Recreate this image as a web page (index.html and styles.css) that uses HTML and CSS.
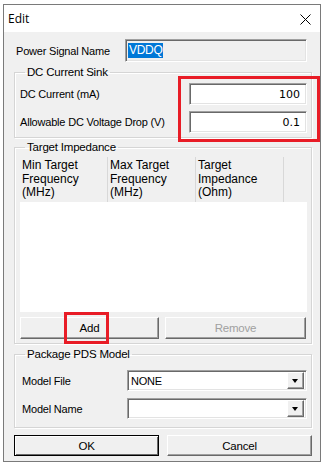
FILE: index.html
```html
<!DOCTYPE html>
<html lang="en">
  <head>
    <meta charset="UTF-8" />
    <title>Edit</title>
    <link rel="stylesheet" href="styles.css">
  </head>
  <body>
    <div class="window">
      <div class="titlebar">
        <span class="title">Edit</span>
        <svg class="close" width="11" height="11" viewBox="0 0 11 11">
          <path d="M0.5 0.5 L10.5 10.5 M10.5 0.5 L0.5 10.5" stroke="#000" stroke-width="1" fill="none" />
        </svg>
      </div>

      <div class="client">
        <div class="row name-row">
          <label>Power Signal Name</label>
          <div class="textbox readonly name-box"><span class="selected">VDDQ</span></div>
        </div>

        <fieldset class="group dc-group">
          <legend>DC Current Sink</legend>
          <div class="row">
            <label>DC Current (mA)</label>
            <div class="textbox number">100</div>
          </div>
          <div class="row">
            <label>Allowable DC Voltage Drop (V)</label>
            <div class="textbox number">0.1</div>
          </div>
        </fieldset>

        <fieldset class="group target-group">
          <legend>Target Impedance</legend>
          <div class="listview">
            <div class="list-header">
              <div class="col">Min Target<br />Frequency<br />(MHz)</div>
              <div class="col">Max Target<br />Frequency<br />(MHz)</div>
              <div class="col">Target<br />Impedance<br />(Ohm)</div>
            </div>
            <div class="list-body"></div>
          </div>
          <div class="button-row">
            <button class="btn add-btn">Add</button>
            <button class="btn remove-btn" disabled>Remove</button>
          </div>
        </fieldset>

        <fieldset class="group pds-group">
          <legend>Package PDS Model</legend>
          <div class="row combo-row">
            <label>Model File</label>
            <div class="combo">
              <span class="combo-text">NONE</span>
              <span class="combo-arrow"></span>
            </div>
          </div>
          <div class="row combo-row">
            <label>Model Name</label>
            <div class="combo">
              <span class="combo-text"></span>
              <span class="combo-arrow"></span>
            </div>
          </div>
        </fieldset>

        <div class="dialog-buttons">
          <button class="btn default-btn">OK</button>
          <button class="btn">Cancel</button>
        </div>
      </div>

      <!-- red annotation boxes drawn over the dialog -->
      <div class="mark mark-dc"></div>
      <div class="mark mark-add"></div>
    </div>
  </body>
</html>
```

FILE: styles.css
```css
html,
body {
  margin: 0;
  padding: 0;
  background: #fff;
}

body {
  font-family: 'Liberation Sans', Arial, sans-serif;
  font-size: 11px;
  letter-spacing: -0.2px;
  color: #000;
}

.window {
  position: relative;
  box-sizing: border-box;
  width: 318px;
  margin: 4px 0 0 3px;
  border: 1px solid #7a7a7a;
  background: #f0f0f0;
}

.titlebar {
  display: flex;
  align-items: center;
  justify-content: space-between;
  height: 27px;
  padding: 0 9px 0 4px;
  background: #fff;
}

.title {
  font-family: 'Open Sans', sans-serif;
  font-size: 12px;
  letter-spacing: 0;
}

.close {
  display: block;
  margin-top: 1px;
}

.client {
  padding: 7px 8px 5px 10px;
}

.row {
  display: flex;
  align-items: center;
  justify-content: space-between;
}

.row label {
  display: block;
}

/* sunken edit boxes */
.textbox,
.combo {
  box-sizing: border-box;
  height: 22px;
  border-top: 1px solid #a0a0a0;
  border-left: 1px solid #a0a0a0;
  border-right: 1px solid #fff;
  border-bottom: 1px solid #fff;
  box-shadow: inset 1px 1px 0 #696969, inset -1px -1px 0 #e3e3e3;
  background: #fff;
}

.name-row {
  height: 23px;
  padding-left: 2px;
  padding-right: 5px;
}

.name-box {
  width: 182px;
  height: 23px;
  padding: 3px 0 0 2px;
}

.readonly {
  background: #f0f0f0;
}

.selected {
  display: inline-block;
  background: #0078d7;
  color: #fff;
  font-size: 12px;
  line-height: 15px;
  padding: 0 1px;
  letter-spacing: -0.3px;
}

.number {
  width: 118px;
  padding: 4px 6px 0 0;
  text-align: right;
  font-family: 'DejaVu Sans', sans-serif;
  font-size: 11px;
  letter-spacing: 0;
}

.group {
  box-sizing: border-box;
  width: 298px;
  min-inline-size: 0;
  margin: 0;
  border: 1px solid #d5d5d5;
  box-shadow: inset 1px 1px 0 #fff, 1px 1px 0 #fff;
}

.group legend {
  margin-left: 5px;
  padding: 0 2px;
  font-size: 11.5px;
  line-height: 14px;
}

.dc-group {
  margin-top: 3px;
  padding: 4px 4px 4px 5px;
}

.dc-group .row {
  height: 22px;
}

.dc-group .row + .row {
  margin-top: 6px;
}

.target-group {
  margin-top: 2px;
  padding: 3px 4px 4px 5px;
}

.listview {
  background: #fff;
}

.list-header {
  display: flex;
  height: 45px;
  background: #f0f0f0;
}

.col {
  box-sizing: border-box;
  width: 88px;
  padding: 2px 0 0 2px;
  border-right: 1px solid #d8d8d8;
  font-size: 12px;
  line-height: 13.5px;
  letter-spacing: 0;
}

.list-body {
  height: 110px;
}

.button-row {
  display: flex;
  gap: 6px;
  margin-top: 5px;
}

.btn {
  box-sizing: border-box;
  height: 22px;
  margin: 0;
  padding: 0;
  font-family: 'Liberation Sans', Arial, sans-serif;
  font-size: 11.5px;
  letter-spacing: -0.2px;
  color: #000;
  background: #f0f0f0;
  border-top: 1px solid #fff;
  border-left: 1px solid #fff;
  border-right: 1px solid #696969;
  border-bottom: 1px solid #696969;
  box-shadow: inset -1px -1px 0 #a0a0a0;
}

.add-btn {
  width: 139px;
}

.remove-btn {
  flex: 1;
  margin-right: 1px;
  color: #a0a0a0;
}

.pds-group {
  margin-top: 3px;
  padding: 9px 4px 8px 5px;
}

.combo-row {
  height: 21px;
  padding-left: 2px;
}

.combo-row + .combo-row {
  margin-top: 7px;
}

.combo {
  display: flex;
  align-items: center;
  width: 180px;
  height: 21px;
  padding: 2px;
}

.combo-text {
  flex: 1;
  padding-left: 1px;
  font-size: 11px;
}

.combo-arrow {
  position: relative;
  box-sizing: border-box;
  width: 17px;
  height: 17px;
  background: #f0f0f0;
  border-top: 1px solid #fff;
  border-left: 1px solid #fff;
  border-right: 1px solid #696969;
  border-bottom: 1px solid #696969;
  box-shadow: inset -1px -1px 0 #a0a0a0;
}

.combo-arrow::after {
  content: '';
  position: absolute;
  left: 4px;
  top: 6px;
  border-left: 3.5px solid transparent;
  border-right: 3.5px solid transparent;
  border-top: 4px solid #000;
}

.dialog-buttons {
  display: flex;
  justify-content: space-between;
  margin-top: 7px;
}

.dialog-buttons .btn {
  width: 145px;
  height: 21px;
}

.default-btn {
  border: 1px solid #000;
  box-shadow: inset 1px 1px 0 #fff, inset -1px -1px 0 #696969;
}

/* highlight annotations */
.mark {
  position: absolute;
  box-sizing: border-box;
  border: 3px solid #e81c26;
}

.mark-dc {
  left: 174px;
  top: 71px;
  width: 142px;
  height: 66px;
}

.mark-add {
  left: 60px;
  top: 307px;
  width: 45px;
  height: 32px;
}
```
